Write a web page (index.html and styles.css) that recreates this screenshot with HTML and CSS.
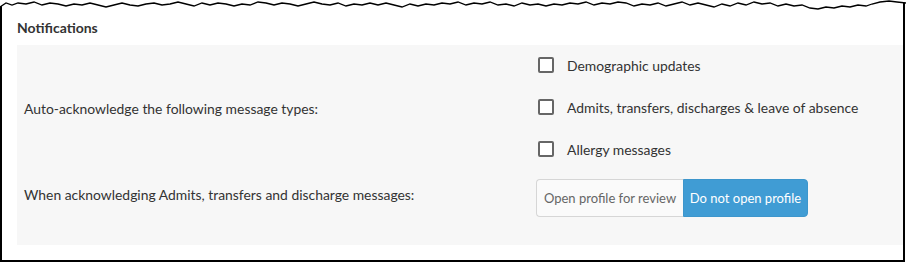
FILE: index.html
```html
<!DOCTYPE html>
<html lang="en">
<head>
<meta charset="utf-8">
<title>Notifications</title>
<link rel="stylesheet" href="styles.css">
</head>
<body>
<div class="sheet">
  <svg class="torn" width="906" height="14" viewBox="0 0 906 14" aria-hidden="true">
    <polygon fill="#fff" points="0,0 906,0 906,3 897,2 889,1 880,2 872,4 866,6 858,5 850,7 842,6 834,8 826,7 818,9 810,8 802,5 794,6 786,4 778,6 770,3 762,4 754,2 746,5 738,3 730,6 722,4 714,7 706,5 698,3 690,5 682,2 674,4 666,6 658,3 650,5 642,4 634,6 626,3 618,2 610,4 602,3 594,5 586,2 578,4 570,3 562,5 554,4 546,6 538,4 530,5 522,3 514,6 506,4 498,5 490,2 482,4 474,3 466,5 458,2 450,4 442,3 434,5 426,4 418,6 410,4 402,7 394,5 386,3 378,5 370,3 362,5 354,4 346,6 338,3 330,5 322,4 314,2 306,4 298,6 290,4 282,3 274,5 266,3 258,2 250,5 242,4 234,6 226,4 218,3 210,5 202,3 194,6 186,4 178,2 170,4 162,5 154,3 146,4 138,6 130,5 122,3 114,5 106,7 98,5 90,3 82,5 74,4 66,6 58,4 50,3 42,5 34,2 26,4 18,3 12,5 6,3 0,7"/>
    <polyline fill="none" stroke="#000" stroke-width="1.3" points="0,7 6,3 12,5 18,3 26,4 34,2 42,5 50,3 58,4 66,6 74,4 82,5 90,3 98,5 106,7 114,5 122,3 130,5 138,6 146,4 154,3 162,5 170,4 178,2 186,4 194,6 202,3 210,5 218,3 226,4 234,6 242,4 250,5 258,2 266,3 274,5 282,3 290,4 298,6 306,4 314,2 322,4 330,5 338,3 346,6 354,4 362,5 370,3 378,5 386,3 394,5 402,7 410,4 418,6 426,4 434,5 442,3 450,4 458,2 466,5 474,3 482,4 490,2 498,5 506,4 514,6 522,3 530,5 538,4 546,6 554,4 562,5 570,3 578,4 586,2 594,5 602,3 610,4 618,2 626,3 634,6 642,4 650,5 658,3 666,6 674,4 682,2 690,5 698,3 706,5 714,7 722,4 730,6 738,3 746,5 754,2 762,4 770,3 778,6 786,4 794,6 802,5 810,8 818,9 826,7 834,8 842,6 850,7 858,5 866,6 872,4 880,2 889,1 897,2 906,3"/>
  </svg>

  <h2 class="title">Notifications</h2>

  <section class="panel">
    <div class="label label-types">Auto-acknowledge the following message types:</div>
    <div class="options">
      <label class="option"><span class="box"></span><span>Demographic updates</span></label>
      <label class="option"><span class="box"></span><span>Admits, transfers, discharges &amp; leave of absence</span></label>
      <label class="option"><span class="box"></span><span>Allergy messages</span></label>
    </div>

    <div class="label label-ack">When acknowledging Admits, transfers and discharge messages:</div>
    <div class="btn-group">
      <button class="btn btn-off" type="button">Open profile for review</button>
      <button class="btn btn-on" type="button">Do not open profile</button>
    </div>
  </section>
</div>
</body>
</html>
```

FILE: styles.css
```css
* { box-sizing: border-box; }

html, body {
  margin: 0;
  padding: 0;
  background: #fff;
}

body {
  font-family: Lato, "Open Sans", sans-serif;
  font-size: 13.9px;
  color: #333;
}

.sheet {
  position: relative;
  width: 905px;
  height: 262px;
  border-left: 2px solid #000;
  border-right: 2px solid #000;
  border-bottom: 2px solid #000;
  padding: 19px 0 0 15px;
}

.torn {
  position: absolute;
  top: 0;
  left: -2px;
  display: block;
}

.title {
  margin: 0;
  font-size: 14px;
  font-weight: 700;
  line-height: 17px;
  color: #333;
  height: 26px;
}

.panel {
  background: #f7f7f7;
  height: 200px;
  display: grid;
  grid-template-columns: 512px auto;
  padding: 0 0 28px 7px;
  align-content: start;
}

.label {
  align-self: center;
  line-height: 17px;
}

.options {
  display: flex;
  flex-direction: column;
}

.option {
  height: 42px;
  display: flex;
  align-items: center;
  gap: 13px;
  padding-left: 2px;
  padding-bottom: 2px;
}

.box {
  width: 16px;
  height: 16px;
  border: 2px solid #666;
  border-radius: 2px;
  background: #fff;
  flex: none;
}

.btn-group {
  display: flex;
  margin-top: 8px;
  height: 38px;
}

.btn {
  font-family: inherit;
  font-size: 13px;
  margin: 0;
  height: 38px;
  white-space: nowrap;
  cursor: pointer;
  padding: 0;
}

.btn-off {
  width: 147px;
  background: #fafafa;
  color: #666;
  border: 1px solid #d6d6d6;
  border-right: none;
  border-radius: 4px 0 0 4px;
}

.btn-on {
  width: 125px;
  background: #409cd4;
  color: #fff;
  border: 1px solid #3d96cc;
  border-radius: 0 4px 4px 0;
}
```
